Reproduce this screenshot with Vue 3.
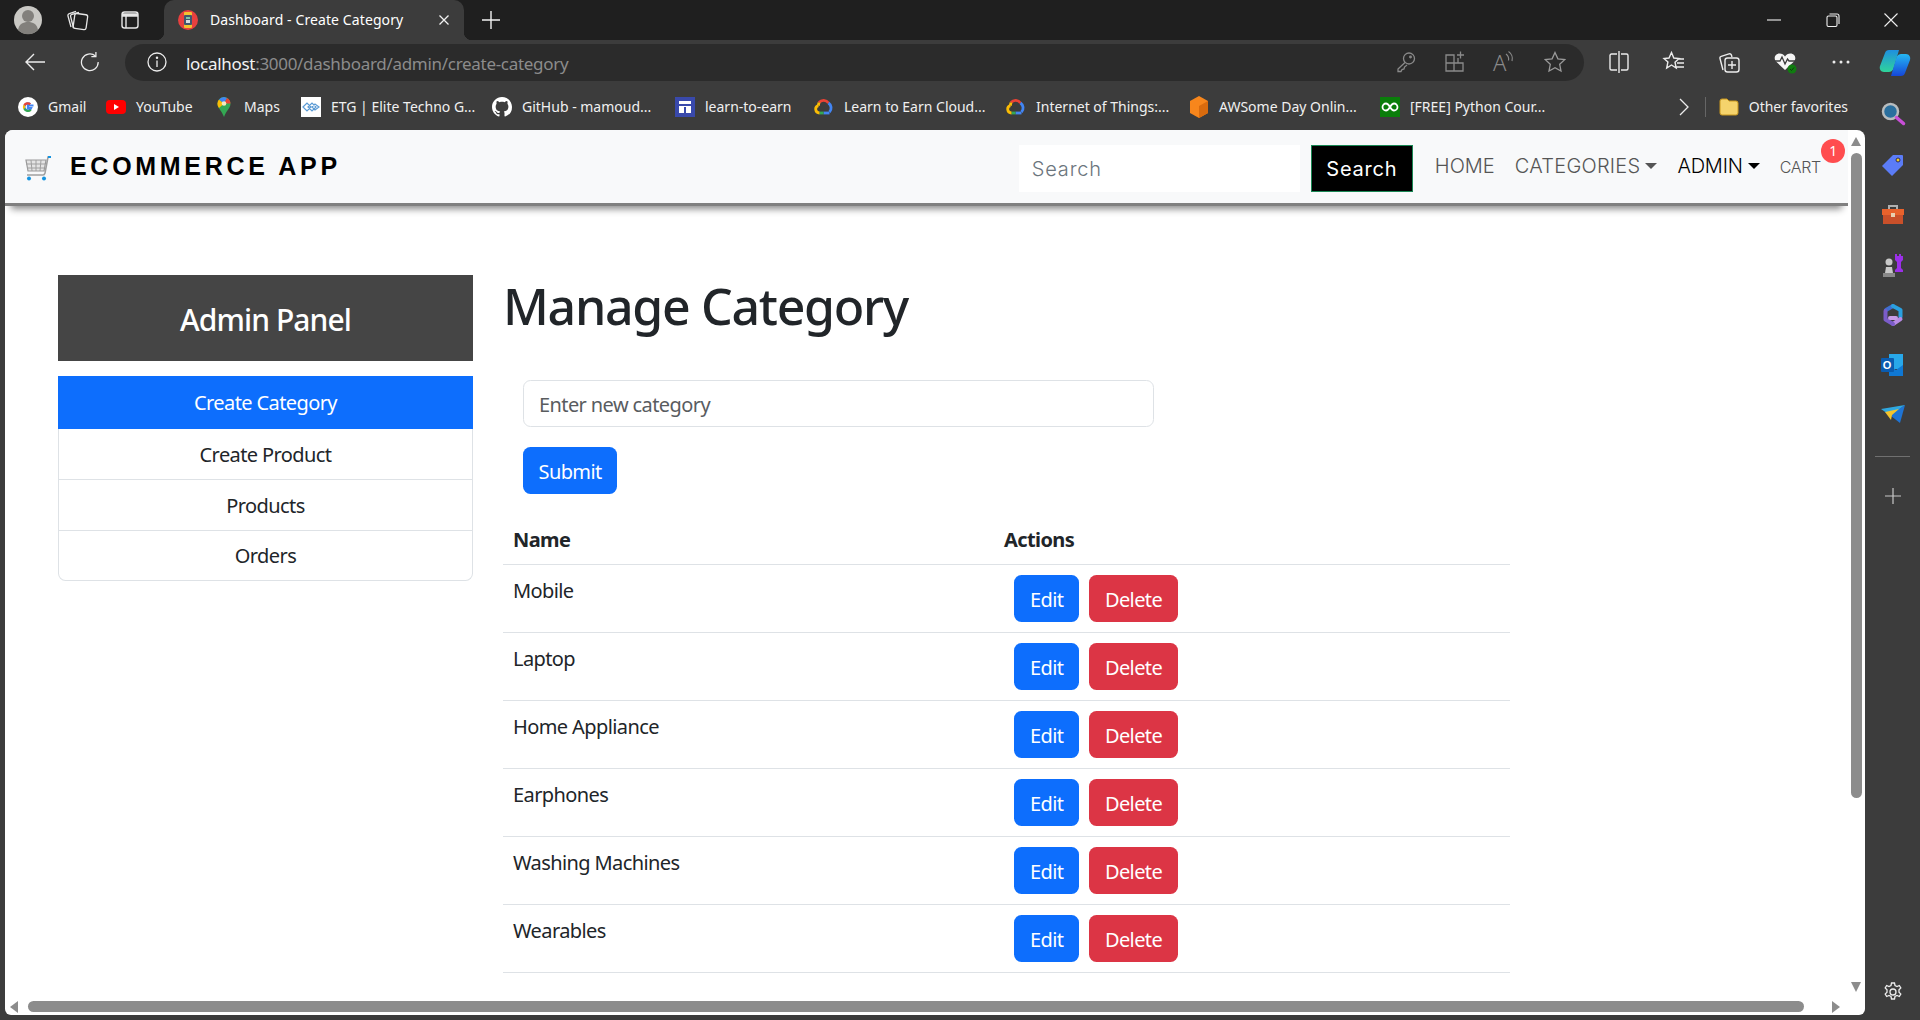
<template>
  <div class="browser">
    <header class="tabbar">
      <div class="avatar">
        <svg width="34" height="34" viewBox="0 0 34 34"><circle cx="17" cy="17" r="14" fill="#c9c8c4"/><circle cx="17" cy="13" r="6" fill="#82807c"/><path d="M7 27c1-6 5-8 10-8s9 2 10 8a14 14 0 0 1-20 0z" fill="#82807c"/></svg>
      </div>
      <button class="ctl workspaces">
        <svg width="24" height="24" viewBox="0 0 24 24" fill="none" stroke="#e6e6e6" stroke-width="1.3"><rect x="9" y="6" width="13" height="15" rx="2" transform="rotate(8 15 13)"/><path d="M6 19 3 8c-.3-1 .2-2 1.300-2.300L11 3.400M8.500 20 5.600 8.500c-.3-1 .3-2 1.300-2.200L14 4.500"/></svg>
      </button>
      <button class="ctl tabactions">
        <svg width="20" height="20" viewBox="0 0 20 20" fill="none" stroke="#e6e6e6" stroke-width="1.400"><rect x="2" y="2" width="16" height="16" rx="2.500"/><path d="M2 5h16" stroke-width="3.500"/><path d="M6 6v12"/></svg>
      </button>
      <div class="tab">
        <svg width="20" height="20" viewBox="0 0 20 20"><circle cx="10" cy="10" r="10" fill="#e8403f"/><rect x="6" y="2" width="8" height="16" rx="1" fill="#f2c230"/><rect x="6" y="5" width="8" height="10" rx="1" fill="#41566e"/><rect x="8" y="7" width="4" height="2" fill="#7cc6a4"/><rect x="8" y="10" width="4" height="3" fill="#d8dde0"/></svg>
        <span class="tab-title">Dashboard - Create Category</span>
        <svg class="tab-close" width="12" height="12" viewBox="0 0 12 12" stroke="#f2f2f2" stroke-width="1.300"><path d="M1.500 1.500l9 9M10.500 1.500l-9 9"/></svg>
      </div>
      <button class="ctl newtab">
        <svg width="20" height="20" viewBox="0 0 20 20" stroke="#f2f2f2" stroke-width="1.400"><path d="M10 1v18M1 10h18"/></svg>
      </button>
      <div class="winctl">
        <svg width="14" height="14" viewBox="0 0 14 14" stroke="#f0f0f0" stroke-width="1.100"><path d="M0 7h14"/></svg>
        <svg width="14" height="14" viewBox="0 0 14 14" fill="none" stroke="#f0f0f0" stroke-width="1.100"><rect x="1" y="3" width="10" height="10.500" rx="1.500"/><path d="M3.500 1h7.500a2 2 0 0 1 2 2v8"/></svg>
        <svg width="14" height="14" viewBox="0 0 14 14" stroke="#f0f0f0" stroke-width="1.100"><path d="M.500.500l13 13M13.500.500l-13 13"/></svg>
      </div>
    </header>

    <div class="toolbar">
      <button class="ctl back">
        <svg width="22" height="20" viewBox="0 0 22 20" fill="none" stroke="#ececec" stroke-width="1.400"><path d="M21 10H2M10 2l-8 8 8 8"/></svg>
      </button>
      <button class="ctl reload">
        <svg width="22" height="22" viewBox="0 0 22 22" fill="none" stroke="#ececec" stroke-width="1.400"><path d="M17 4.500A9.200 9.200 0 1 0 20 11"/><path d="M17.500 0v5h-5"/></svg>
      </button>
      <div class="addressbar">
        <svg class="info" width="20" height="20" viewBox="0 0 20 20" fill="none" stroke="#ececec" stroke-width="1.300"><circle cx="10" cy="10" r="9"/><path d="M10 8.500V15"/><circle cx="10" cy="5.800" r=".6"/></svg>
        <span class="url"><span class="host">localhost</span>:3000/dashboard/admin/create-category</span>
        <div class="addr-icons">
          <svg width="22" height="22" viewBox="0 0 22 22" fill="none" stroke="#8a8a8a" stroke-width="1.300"><circle cx="14" cy="7.500" r="5.500"/><path d="M10 11.500 3 18v2.500h3l1-2 2-.5.500-2 2.500-2"/><circle cx="15.500" cy="6" r=".8"/></svg>
          <svg width="22" height="22" viewBox="0 0 22 22" fill="none" stroke="#8a8a8a" stroke-width="1.300"><path d="M2 4h8v16H2zM2 12h17v8h-9M14 12V7M13 4h7M16.500.500v7"/></svg>
          <div class="read">
            <span class="read-a">A</span>
            <svg width="10" height="14" viewBox="0 0 10 14" fill="none" stroke="#8a8a8a" stroke-width="1.200"><path d="M1 4c2 1.500 3 4 2.500 6.500M3.500 1.500c3 2 4.500 6 3.500 9.500"/></svg>
          </div>
          <svg width="22" height="22" viewBox="0 0 22 22" fill="none" stroke="#9a9a9a" stroke-width="1.300"><path d="M11 1.500l2.900 6.300 6.800.8-5 4.700 1.300 6.800-6-3.400-6 3.400 1.300-6.800-5-4.700 6.800-.8z"/></svg>
        </div>
      </div>
      <div class="tool-icons">
        <svg width="24" height="24" viewBox="0 0 24 24" fill="none" stroke="#ececec" stroke-width="1.400"><path d="M10 4H4.500A1.500 1.500 0 0 0 3 5.500v13A1.500 1.500 0 0 0 4.500 20H10M14 4h5.500A1.500 1.500 0 0 1 21 5.500v13a1.500 1.500 0 0 1-1.500 1.500H14M12 1v22"/></svg>
        <svg width="24" height="24" viewBox="0 0 24 24" fill="none" stroke="#ececec" stroke-width="1.400"><path d="M9.500 2.500l2.300 5.500 5.200.5-4 3.700 1.200 5.800-4.700-3-4.800 3L5.900 12 2 8.500 7 8zM16 9h6M15 13h7M14.500 17H22"/></svg>
        <svg width="24" height="24" viewBox="0 0 24 24" fill="none" stroke="#ececec" stroke-width="1.400"><path d="M6 20 3 8.500C2.700 7.500 3.200 6.600 4.200 6.300L12 3.800c1-.3 2 .2 2.300 1L15 7"/><rect x="8" y="8" width="14" height="14" rx="2.500"/><path d="M15 11v8M11 15h8"/></svg>
        <svg width="26" height="26" viewBox="0 0 26 26"><path d="M13 21 4 12.500C1 9 3.500 4.500 7.500 4.500c2.500 0 4.300 1.300 5.500 3 1.200-1.700 3-3 5.500-3 4 0 6.500 4.500 3.500 8z" fill="#f5f5f5"/><path d="M2 12h6l2-4 3 7 2.500-5 1.500 2h7" fill="none" stroke="#3c3c3c" stroke-width="1.300"/><circle cx="20" cy="20" r="4.500" fill="#107c10"/><path d="M18 20l1.500 1.500 2.500-3" fill="none" stroke="#0c3d0c" stroke-width="1"/></svg>
        <svg width="24" height="24" viewBox="0 0 24 24" fill="#ececec"><circle cx="5" cy="12" r="1.500"/><circle cx="12" cy="12" r="1.500"/><circle cx="19" cy="12" r="1.500"/></svg>
        <svg class="copilot" width="32" height="30" viewBox="0 0 32 30">
          <defs>
            <linearGradient id="cpa" x1="0" y1="0" x2="0" y2="1"><stop offset="0" stop-color="#1f8fe0"/><stop offset="1" stop-color="#2fd49a"/></linearGradient>
            <linearGradient id="cpb" x1="0" y1="0" x2="0" y2="1"><stop offset="0" stop-color="#25b8f2"/><stop offset="1" stop-color="#1546d8"/></linearGradient>
          </defs>
          <path d="M10 3h10l-5 17c-1 4-3 5-6 5H5c-3 0-5-3-4-6L6 6c.6-2 2-3 4-3z" fill="url(#cpa)"/>
          <path d="M22 29H12l5-17c1-4 3-5 6-5h4c3 0 5 3 4 6l-5 13c-.6 2-2 3-4 3z" fill="url(#cpb)"/>
        </svg>
      </div>
    </div>

    <div class="bookmarks">
      <a
        v-for="b in bookmarks"
        :key="b.label"
        class="bookmark"
        :style="{ width: b.width + 'px' }"
      >
        <svg v-if="b.icon === 'gmail'" width="20" height="20" viewBox="0 0 20 20"><circle cx="10" cy="10" r="10" fill="#fff"/><path d="M15.500 8.500H10v2.500h3.200a3.500 3.500 0 1 1-1-3.800" fill="none" stroke="#4285f4" stroke-width="2.200"/><path d="M12.300 7.200a4 4 0 0 0-6 1.200" fill="none" stroke="#ea4335" stroke-width="2.200"/><path d="M6.300 8.400a4 4 0 0 0 0 3.200" fill="none" stroke="#fbbc05" stroke-width="2.200"/><path d="M6.300 11.600a4 4 0 0 0 6.500 1.200" fill="none" stroke="#34a853" stroke-width="2.200"/></svg>
        <svg v-else-if="b.icon === 'youtube'" width="20" height="20" viewBox="0 0 20 20"><rect y="3" width="20" height="14" rx="4" fill="#f00"/><path d="M8 7l5 3-5 3z" fill="#fff"/></svg>
        <svg v-else-if="b.icon === 'maps'" width="20" height="20" viewBox="0 0 20 20"><path d="M10 0a6.500 6.500 0 0 0-6.500 6.500C3.500 11 8 14 10 20c2-6 6.500-9 6.500-13.500A6.500 6.500 0 0 0 10 0z" fill="#34a853"/><path d="M5 2.500 10 6.500 5 11a6.500 6.500 0 0 1 0-8.500z" fill="#fbbc05"/><path d="M5 2.500A6.500 6.500 0 0 1 10 0l3 1-3 5.500z" fill="#4285f4"/><path d="M13 1a6.500 6.500 0 0 1 3.500 5.500L10 6.500z" fill="#ea4335"/><circle cx="10" cy="6.500" r="2.300" fill="#f5e9c0"/></svg>
        <svg v-else-if="b.icon === 'etg'" width="20" height="20" viewBox="0 0 20 20"><rect width="20" height="20" fill="#fff"/><path d="M2 10l4-4 4 4-4 4zM7 10l4-4 4 4-4 4zM11 10l3-3 4 3-4 3z" fill="none" stroke="#5b9bd5" stroke-width="1.200"/></svg>
        <svg v-else-if="b.icon === 'github'" width="20" height="20" viewBox="0 0 16 16"><path fill="#fff" d="M8 0C3.580 0 0 3.580 0 8c0 3.540 2.290 6.530 5.470 7.590.4.070.55-.17.55-.38 0-.19-.01-.82-.01-1.490-2.010.37-2.530-.49-2.690-.94-.09-.23-.48-.94-.82-1.130-.28-.15-.68-.52-.01-.53.630-.01 1.080.58 1.230.82.720 1.210 1.870.87 2.330.66.070-.52.280-.87.510-1.070-1.780-.2-3.640-.89-3.640-3.950 0-.87.310-1.590.820-2.150-.08-.2-.36-1.020.08-2.120 0 0 .67-.21 2.200.82.640-.18 1.320-.27 2-.27s1.360.09 2 .27c1.530-1.040 2.200-.82 2.200-.82.440 1.100.160 1.920.08 2.120.51.560.82 1.270.82 2.150 0 3.070-1.870 3.750-3.650 3.950.29.250.54.730.54 1.480 0 1.070-.01 1.930-.01 2.200 0 .21.150.46.550.38A8.010 8.010 0 0 0 16 8c0-4.420-3.580-8-8-8z"/></svg>
        <svg v-else-if="b.icon === 'classroom'" width="20" height="20" viewBox="0 0 20 20"><rect width="20" height="20" fill="#3949ab"/><path d="M4 4h12v3H4z" fill="#fff"/><path d="M4 9h12v1H4zM4 10h5v6H4zM11 10h5v6h-5z" fill="#fff"/></svg>
        <svg v-else-if="b.icon === 'cloud'" width="20" height="20" viewBox="0 0 20 20" fill="none" stroke-width="2.800"><path d="M5 5.500a6 6 0 0 1 9.500.5" stroke="#ea4335"/><path d="M14.500 6a6 6 0 0 1 1 9" stroke="#4285f4"/><path d="M15.500 16H9.500" stroke="#4285f4"/><path d="M9.500 16H5.500" stroke="#34a853"/><path d="M5.500 16a3.800 3.800 0 0 1-1.200-7.400" stroke="#fbbc05"/><path d="M4.300 8.600 5 5.500" stroke="#fbbc05"/></svg>
        <svg v-else-if="b.icon === 'aws'" width="20" height="22" viewBox="0 0 20 22"><path d="M10 0l9 5v12l-9 5-9-5V5z" fill="#f7861c"/><path d="M10 10l9-5v12l-9 5z" fill="#d96b0e"/></svg>
        <svg v-else-if="b.icon === 'python'" width="20" height="20" viewBox="0 0 20 20"><rect width="20" height="20" fill="#0a7d0a"/><path d="M10 10c-1.500-2.500-2.500-3.500-4-3.500a3.500 3.500 0 0 0 0 7c1.500 0 2.500-1 4-3.500 1.500-2.500 2.500-3.500 4-3.500a3.500 3.500 0 0 1 0 7c-1.500 0-2.500-1-4-3.500z" fill="none" stroke="#fff" stroke-width="1.800"/></svg>
        <span>{{ b.label }}</span>
      </a>
      <div class="bm-right">
        <svg width="12" height="18" viewBox="0 0 12 18" fill="none" stroke="#ececec" stroke-width="1.300"><path d="M2 1l8 8-8 8"/></svg>
        <i class="bm-sep"></i>
        <svg width="20" height="18" viewBox="0 0 20 18"><path d="M1 3a2 2 0 0 1 2-2h5l2 2h7a2 2 0 0 1 2 2v10a2 2 0 0 1-2 2H3a2 2 0 0 1-2-2z" fill="#f5d36c" stroke="#c9971d"/></svg>
        <span class="bm-other">Other favorites</span>
      </div>
    </div>

    <div class="below">
      <div class="viewport">
        <div class="scrollarea">
          <nav class="navbar">
            <svg class="cart" width="27" height="26" viewBox="0 0 27 26" fill="none">
              <path d="M1 5h20l-2 11H3z" fill="#e4e4e4" stroke="#999" stroke-width="1.200"/>
              <path d="M1 9h19M2 13h17M6 5l1 11M11 5v11M16 5l-1 11" stroke="#a0a0a0"/>
              <path d="M25 2h-2l-3 16q-.5 2-2 2H2" stroke="#a0a0a0" stroke-width="1.600"/>
              <path d="M23 2h3" stroke="#1493e0" stroke-width="2"/>
              <circle cx="4" cy="23.500" r="2" fill="#1493e0"/><circle cx="19" cy="23.500" r="2" fill="#1493e0"/>
            </svg>
            <span class="brand">ECOMMERCE APP</span>
            <div class="nav-right">
              <input class="nav-search" placeholder="Search" />
              <button class="nav-search-btn">Search</button>
              <a class="nav-link home">HOME</a>
              <a class="nav-link dropdown">CATEGORIES</a>
              <a class="nav-link dropdown active">ADMIN</a>
              <a class="nav-link cart-link">CART<b class="badge">1</b></a>
            </div>
          </nav>

          <div class="content">
            <aside class="side">
              <h4 class="panel-title">Admin Panel</h4>
              <div class="side-list">
                <a
                  v-for="(item, i) in menu"
                  :key="item"
                  class="side-item"
                  :class="{ active: i === 0 }"
                >{{ item }}</a>
              </div>
            </aside>

            <main class="main">
              <h1>Manage Category</h1>
              <form class="cat-form" @submit.prevent>
                <input class="cat-input" placeholder="Enter new category" />
                <button class="btn primary">Submit</button>
              </form>
              <table>
                <thead>
                  <tr><th class="col-name">Name</th><th>Actions</th></tr>
                </thead>
                <tbody>
                  <tr v-for="c in categories" :key="c">
                    <td>{{ c }}</td>
                    <td class="actions">
                      <button class="btn primary">Edit</button>
                      <button class="btn danger">Delete</button>
                    </td>
                  </tr>
                </tbody>
              </table>
            </main>
          </div>
        </div>

        <div class="vscroll">
          <i class="arrow up"></i>
          <div class="vthumb"></div>
          <i class="arrow down"></i>
        </div>
        <div class="hscroll">
          <i class="arrow left"></i>
          <div class="hthumb"></div>
          <i class="arrow right"></i>
        </div>
      </div>

      <aside class="edge">
        <svg width="26" height="26" viewBox="0 0 26 26"><circle cx="10.500" cy="10.500" r="7.500" fill="#2a6f9e" stroke="#b8bcbe" stroke-width="2.500"/><path d="M16.500 16.500l7 6" stroke="#c94fd8" stroke-width="3.500" stroke-linecap="round"/></svg>
        <svg width="24" height="24" viewBox="0 0 24 24"><path d="M12 2h9a1 1 0 0 1 1 1v9L11 23 1 13z" fill="#5b7cf7"/><circle cx="17" cy="7" r="2" fill="#f5d020" stroke="#2a2a60"/></svg>
        <svg width="24" height="24" viewBox="0 0 24 24"><path d="M8 6V3h8v3" fill="none" stroke="#b0b0b0" stroke-width="2"/><path d="M1 6h22v6H1z" fill="#e8622c"/><path d="M2 12h20v9H2z" fill="#c9502a"/><rect x="10" y="10" width="4" height="4" fill="#e8d0b0"/></svg>
        <svg width="24" height="24" viewBox="0 0 24 24"><path d="M14 1h2v2h2V1h2v2h2v1v3l-2 2v6l2 2v2H14v-2l2-2V9l-2-2z" fill="#9b30e8"/><circle cx="8" cy="9" r="3.500" fill="#c8c8c8"/><path d="M5 14h6l1 6H4z" fill="#c8c8c8"/><path d="M2 20h12v4H2z" fill="#888"/></svg>
        <svg width="24" height="24" viewBox="0 0 24 24" fill="none" stroke-width="4" stroke-linecap="round" stroke-linejoin="round"><path d="M5 7 12 3" stroke="#3f6fd0"/><path d="M12 3 19.500 7v7" stroke="#2aa0e0"/><path d="M19.500 16 12 21" stroke="#b88ae6"/><path d="M12 21 4.500 16.500V8" stroke="#7b5cc9"/><path d="M9 15h6" stroke="#c79ce8"/></svg>
        <div class="outlook">
          <svg width="24" height="24" viewBox="0 0 24 24"><path d="M8 1h14v15H8z" fill="#28a8ea"/><path d="M8 12l7 5 7-5v11H8z" fill="#0f78d4"/><rect y="5" width="13" height="14" rx="1" fill="#0a5cb0"/></svg>
          <span class="outlook-o">O</span>
        </div>
        <svg width="26" height="24" viewBox="0 0 26 24"><path d="M1 6 25 2 11 13z" fill="#2fa8e0"/><path d="M11 13l2-3 12-8-5 18z" fill="#1f74d4"/><path d="M5 9l6 8 1-5 7-6z" fill="#f5c42c"/></svg>
        <i class="edge-sep"></i>
        <svg class="edge-plus" width="16" height="16" viewBox="0 0 16 16" stroke="#c8c8c8" stroke-width="1.200"><path d="M8 0v16M0 8h16"/></svg>
        <svg class="edge-gear" width="20" height="20" viewBox="0 0 20 20" fill="none" stroke="#ececec" stroke-width="1.300"><circle cx="10" cy="10" r="3"/><path d="M8.500 1h3l.5 2.500 2 1 2.300-1 1.500 2.500-1.800 1.700v2.600l1.800 1.700-1.500 2.500-2.300-1-2 1-.5 2.500h-3l-.5-2.500-2-1-2.300 1-1.500-2.500 1.800-1.700V7.700L2.200 6l1.500-2.500 2.300 1 2-1z"/></svg>
      </aside>
    </div>
  </div>
</template>

<script setup>
const bookmarks = [
  { label: 'Gmail', icon: 'gmail', width: 88 },
  { label: 'YouTube', icon: 'youtube', width: 108 },
  { label: 'Maps', icon: 'maps', width: 87 },
  { label: 'ETG | Elite Techno G...', icon: 'etg', width: 191 },
  { label: 'GitHub - mamoud...', icon: 'github', width: 183 },
  { label: 'learn-to-earn', icon: 'classroom', width: 139 },
  { label: 'Learn to Earn Cloud...', icon: 'cloud', width: 192 },
  { label: 'Internet of Things:...', icon: 'cloud', width: 183 },
  { label: 'AWSome Day Onlin...', icon: 'aws', width: 191 },
  { label: '[FREE] Python Cour...', icon: 'python', width: 170 }
]

const menu = ['Create Category', 'Create Product', 'Products', 'Orders']

const categories = [
  'Mobile',
  'Laptop',
  'Home Appliance',
  'Earphones',
  'Washing Machines',
  'Wearables'
]
</script>

<style>
html,
body {
  margin: 0;
  overflow: hidden;
}
</style>

<style scoped>
.browser {
  width: 1920px;
  height: 1020px;
  display: flex;
  flex-direction: column;
  overflow: hidden;
  background: #3c3c3c;
  font-family: "Noto Sans", "Open Sans", sans-serif;
  color: #fff;
}

button {
  font-family: inherit;
}

.ctl {
  background: none;
  border: 0;
  padding: 0;
  display: flex;
  align-items: center;
  justify-content: center;
}

/* title bar */
.tabbar {
  height: 40px;
  flex: none;
  background: #1f1f1f;
  display: flex;
  align-items: center;
}

.avatar {
  width: 56px;
  display: flex;
  justify-content: center;
}

.workspaces {
  width: 42px;
}

.tabactions {
  width: 64px;
}

.tab {
  width: 300px;
  height: 40px;
  margin-left: 2px;
  box-sizing: border-box;
  padding: 0 14px 0 14px;
  background: #3c3c3c;
  border-radius: 10px 10px 0 0;
  display: flex;
  align-items: center;
  position: relative;
}

.tab::before,
.tab::after {
  content: "";
  position: absolute;
  bottom: 0;
  width: 8px;
  height: 8px;
}

.tab::before {
  left: -8px;
  background: radial-gradient(circle at 0 0, #1f1f1f 8px, #3c3c3c 8.500px);
}

.tab::after {
  right: -8px;
  background: radial-gradient(circle at 100% 0, #1f1f1f 8px, #3c3c3c 8.500px);
}

.tab-title {
  margin-left: 12px;
  margin-bottom: 1px;
  font-size: 14px;
  letter-spacing: 0.1px;
  white-space: nowrap;
  flex: 1;
}

.newtab {
  width: 54px;
}

.winctl {
  margin-left: auto;
  width: 153px;
  box-sizing: border-box;
  padding: 0 22px 0 0;
  display: flex;
  justify-content: space-between;
}

/* toolbar */
.toolbar {
  height: 43px;
  flex: none;
  display: flex;
  align-items: center;
}

.back {
  width: 70px;
}

.reload {
  width: 20px;
  margin-left: 10px;
  margin-right: 25px;
}

.addressbar {
  width: 1459px;
  height: 37px;
  margin-top: 1px;
  box-sizing: border-box;
  padding: 0 18px 0 22px;
  background: #2b2b2b;
  border-radius: 19px;
  display: flex;
  align-items: center;
}

.url {
  margin-left: 19px;
  padding-top: 2px;
  font-size: 17px;
  letter-spacing: -0.3px;
  color: #8c8c8c;
  white-space: nowrap;
}

.host {
  color: #f2f2f2;
}

.addr-icons {
  margin-left: auto;
  display: flex;
  gap: 27px;
  align-items: center;
}

.read {
  width: 24px;
  height: 30px;
  display: flex;
  align-items: flex-start;
  color: #8a8a8a;
}

.read-a {
  font-size: 22px;
  line-height: 30px;
  font-weight: 300;
}

.read svg {
  margin: 3px 0 0 -1px;
}

.tool-icons {
  margin-left: 23px;
  display: flex;
  align-items: center;
  gap: 31px;
}

.copilot {
  margin-left: -5px;
}

/* bookmarks */
.bookmarks {
  height: 47px;
  flex: none;
  box-sizing: border-box;
  padding: 0 0 0 18px;
  display: flex;
  align-items: center;
  font-size: 14px;
  white-space: nowrap;
  color: #f0f0f0;
}

.bookmark {
  flex: none;
  display: flex;
  align-items: center;
  gap: 10px;
}

.bm-right {
  margin-left: auto;
  margin-right: 72px;
  display: flex;
  align-items: center;
}

.bm-sep {
  width: 1px;
  height: 20px;
  margin: 0 13px 0 15px;
  background: #666;
}

.bm-other {
  margin-left: 10px;
}

/* page */
.below {
  flex: 1;
  min-height: 0;
  display: flex;
}

.viewport {
  width: 1860px;
  height: 885px;
  margin-left: 5px;
  border-radius: 8px 8px 6px 6px;
  overflow: hidden;
  background: #fff;
  display: grid;
  grid-template-columns: 1843px 17px;
  grid-template-rows: 868px 17px;
}

.scrollarea {
  overflow: hidden;
  color: #212529;
}

.navbar {
  height: 73px;
  box-sizing: content-box;
  background: #f8f9fa;
  border-bottom: 3px solid #808080;
  box-shadow: 0 9px 7px -6px #8a8a8a;
  display: flex;
  align-items: center;
  padding-left: 20px;
  font-family: Inter, "Noto Sans", sans-serif;
}

.cart {
  flex: none;
  margin-top: 2px;
}

.brand {
  margin-left: 18px;
  margin-bottom: 1px;
  font-family: "Liberation Sans", Arial, sans-serif;
  font-weight: 700;
  font-size: 25px;
  letter-spacing: 3.700px;
  color: #000;
}

.nav-right {
  margin-left: auto;
  padding-top: 4px;
  display: flex;
  align-items: center;
}

.nav-search {
  width: 281px;
  height: 47px;
  box-sizing: border-box;
  padding: 0 13px;
  border: 0;
  outline: 0;
  background: #fff;
  font-family: inherit;
  font-size: 20px;
  font-weight: 300;
  letter-spacing: 0.8px;
}

.nav-search::placeholder {
  color: #6c757d;
}

.nav-search-btn {
  width: 102px;
  height: 47px;
  margin-left: 11px;
  background: #000;
  color: #fff;
  border: 1px solid #198754;
  font-family: inherit;
  font-size: 20px;
  letter-spacing: 0.8px;
}

.nav-link {
  position: relative;
  font-weight: 300;
  font-size: 20px;
  letter-spacing: 0;
  color: #555;
  margin-bottom: 6px;
}

.home {
  margin-left: 22px;
}

.dropdown {
  margin-left: 20px;
  letter-spacing: 0.25px;
}

.dropdown::after {
  content: "";
  display: inline-block;
  margin-left: 5px;
  vertical-align: 4px;
  border-top: 6px solid currentColor;
  border-left: 6px solid transparent;
  border-right: 6px solid transparent;
}

.dropdown.active {
  color: #000;
  letter-spacing: -0.2px;
}

.cart-link {
  margin-left: 20px;
  margin-right: 27px;
  font-size: 16px;
  letter-spacing: -0.3px;
  margin-bottom: 4px;
}

.badge {
  position: absolute;
  top: -18px;
  right: -24px;
  width: 24px;
  height: 24px;
  border-radius: 50%;
  background: #ff4d4f;
  color: #fff;
  font: 400 14px/24px "Noto Sans", sans-serif;
  text-align: center;
}

.content {
  display: flex;
  padding: 69px 0 0 53px;
}

.side {
  width: 415px;
  flex: none;
}

.panel-title {
  margin: 0;
  height: 86px;
  padding-top: 2px;
  box-sizing: border-box;
  background: #454545;
  color: #fff;
  font-size: 30px;
  font-weight: 500;
  letter-spacing: -0.9px;
  display: flex;
  align-items: center;
  justify-content: center;
}

.side-list {
  margin-top: 15px;
  display: flex;
  flex-direction: column;
}

.side-item {
  height: 51px;
  box-sizing: border-box;
  display: flex;
  align-items: center;
  justify-content: center;
  font-size: 20px;
  letter-spacing: -0.6px;
  border: 1px solid #dee2e6;
  border-top: 0;
}

.side-item:last-child {
  height: 50px;
  border-radius: 0 0 7.500px 7.500px;
}

.side-item.active {
  height: 53px;
  background: #0d6efd;
  color: #fff;
  border: 0;
}

.main {
  width: 1007px;
  margin-left: 30px;
}

h1 {
  margin: 1px 0 44px;
  font-size: 50px;
  line-height: 60px;
  font-weight: 500;
  letter-spacing: -1.300px;
  color: #212529;
}

.cat-form {
  padding-left: 20px;
}

.cat-input {
  display: block;
  width: 631px;
  height: 47px;
  box-sizing: border-box;
  padding: 2px 15px 0;
  border: 1px solid #dee2e6;
  border-radius: 7.500px;
  outline: 0;
  font-family: inherit;
  font-size: 20px;
  letter-spacing: -0.6px;
  margin-bottom: 20px;
}

.cat-input::placeholder {
  color: #595c5f;
}

.btn {
  height: 47px;
  padding: 2px 15.500px 0;
  border: 0;
  border-radius: 7.500px;
  color: #fff;
  font-size: 20px;
  letter-spacing: -0.6px;
}

.btn.primary {
  background: #0d6efd;
}

.btn.danger {
  background: #dc3545;
  margin-left: 10px;
}

table {
  width: 1007px;
  margin-top: 20px;
  border-collapse: collapse;
  table-layout: fixed;
  font-size: 20px;
  letter-spacing: -0.6px;
  line-height: 30px;
}

th,
td {
  padding: 11px 10px 9px;
  text-align: left;
  vertical-align: top;
  border-bottom: 1px solid #dee2e6;
}

th {
  font-weight: 700;
}

.col-name {
  width: 471px;
}

td.actions {
  padding: 10px 10px 10px 20px;
  line-height: 0;
}

.actions .btn {
  padding: 2px 16px 0;
}

.actions .btn.danger {
  padding: 2px 15.500px 0;
}

/* scrollbars */
.vscroll {
  grid-row: 1 / 3;
  grid-column: 2;
  height: 868px;
  display: flex;
  flex-direction: column;
  align-items: center;
  padding-top: 7px;
  box-sizing: border-box;
  padding-right: 1px;
}

.vthumb {
  width: 11px;
  height: 645px;
  margin-top: 7px;
  margin-bottom: 184px;
  border-radius: 6px;
  background: #8c8c8c;
}

.hscroll {
  grid-row: 2;
  grid-column: 1;
  display: flex;
  align-items: center;
  padding-left: 5px;
}

.hthumb {
  width: 1776px;
  height: 11px;
  margin: 0 28px 0 10px;
  border-radius: 6px;
  background: #8c8c8c;
}

.arrow {
  display: block;
  width: 0;
  height: 0;
  flex: none;
}

.arrow.up {
  border-bottom: 9px solid #8c8c8c;
  border-left: 5px solid transparent;
  border-right: 5px solid transparent;
}

.arrow.down {
  border-top: 10px solid #8c8c8c;
  border-left: 5px solid transparent;
  border-right: 5px solid transparent;
}

.arrow.left {
  border-right: 8px solid #8c8c8c;
  border-top: 6px solid transparent;
  border-bottom: 6px solid transparent;
}

.arrow.right {
  border-left: 8px solid #8c8c8c;
  border-top: 6px solid transparent;
  border-bottom: 6px solid transparent;
}

/* edge sidebar */
.edge {
  flex: 1;
  height: 920px;
  margin-top: -30px;
  padding-top: 1px;
  box-sizing: border-box;
  display: flex;
  flex-direction: column;
  align-items: center;
  gap: 26px;
  position: relative;
}

.outlook {
  position: relative;
  width: 24px;
  height: 24px;
}

.outlook-o {
  position: absolute;
  left: 0;
  top: 5px;
  width: 13px;
  text-align: center;
  font: 700 11px/14px "Liberation Sans", sans-serif;
  color: #fff;
}

.edge-sep {
  width: 35px;
  height: 1px;
  margin-top: 3px;
  background: #707070;
}

.edge-plus {
  margin-top: 5px;
}

.edge-gear {
  position: absolute;
  top: 882px;
}
</style>
